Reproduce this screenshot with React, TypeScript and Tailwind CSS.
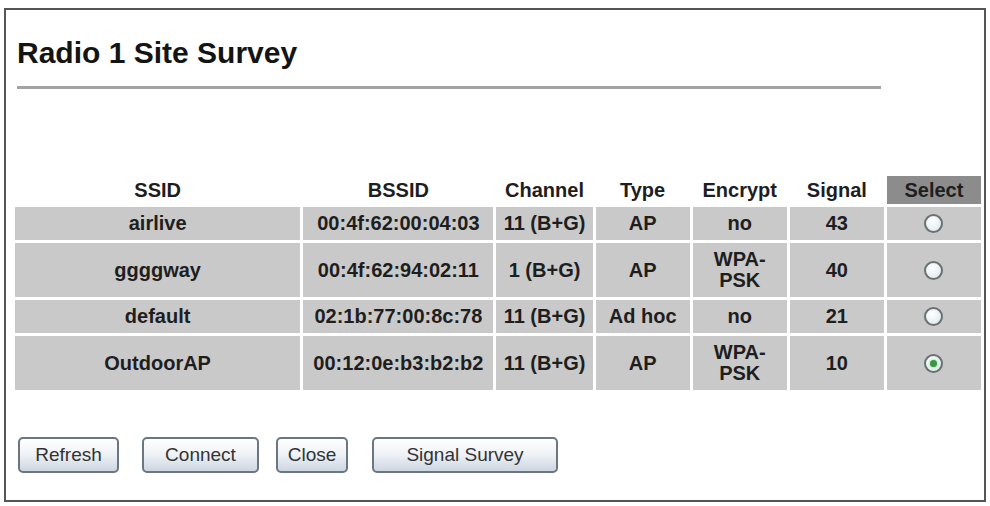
import React from 'react'

type Network = {
  ssid: string
  bssid: string
  channel: string
  type: string
  encrypt: string[]
  signal: number
  selected?: boolean
}

const networks: Network[] = [
  { ssid: 'airlive', bssid: '00:4f:62:00:04:03', channel: '11 (B+G)', type: 'AP', encrypt: ['no'], signal: 43 },
  { ssid: 'ggggway', bssid: '00:4f:62:94:02:11', channel: '1 (B+G)', type: 'AP', encrypt: ['WPA-', 'PSK'], signal: 40 },
  { ssid: 'default', bssid: '02:1b:77:00:8c:78', channel: '11 (B+G)', type: 'Ad hoc', encrypt: ['no'], signal: 21 },
  { ssid: 'OutdoorAP', bssid: '00:12:0e:b3:b2:b2', channel: '11 (B+G)', type: 'AP', encrypt: ['WPA-', 'PSK'], signal: 10, selected: true },
]

const headers = ['SSID', 'BSSID', 'Channel', 'Type', 'Encrypt', 'Signal']

const Radio = ({ checked }: { checked?: boolean }) => (
  <span className="mx-auto flex h-[19px] w-[19px] items-center justify-center rounded-full border-2 border-[#6a7074] bg-[radial-gradient(circle_at_40%_35%,#ffffff,#d9e7e8)]">
    {checked && <span className="h-[7px] w-[7px] rounded-full bg-[#3a9644] shadow-[0_0_3px_#6fcf7a]" />}
  </span>
)

const Button = ({ label, width }: { label: string; width: string }) => (
  <button
    className={`${width} h-[36px] rounded-[5px] border-2 border-[#6b7682] bg-gradient-to-b from-[#ffffff] via-[#eef1f5] to-[#cdd6e2] text-[19px] text-[#333]`}
  >
    {label}
  </button>
)

const SiteSurvey = () => {
  return (
    <div className="pl-[4px] pt-[8px] font-['Liberation_Sans',Arial,sans-serif]">
      <div className="flex h-[494px] w-[982px] flex-col border-2 border-[#555] bg-white">
        <h1 className="ml-[11px] mt-[26px] text-[30px] font-bold leading-[34px] text-[#141414]">
          Radio 1 Site Survey
        </h1>
        <div className="ml-[11px] mt-[16px] h-[3px] w-[864px] bg-[#a3a3a3]" />

        <table className="ml-[6px] mt-[84px] table-fixed border-separate border-spacing-[3px] text-[20px] font-bold text-[#1e1e1e]">
          <colgroup>
            <col className="w-[285px]" />
            <col className="w-[190px]" />
            <col className="w-[96px]" />
            <col className="w-[94px]" />
            <col className="w-[94px]" />
            <col className="w-[94px]" />
            <col className="w-[94px]" />
          </colgroup>
          <thead>
            <tr>
              {headers.map((h) => (
                <th key={h} className="h-[28px] p-0 text-center leading-[28px]">
                  {h}
                </th>
              ))}
              <th className="h-[28px] bg-[#8c8c8c] p-0 text-center leading-[28px]">Select</th>
            </tr>
          </thead>
          <tbody>
            {networks.map((n) => (
              <tr key={n.bssid}>
                <td className="bg-[#c9c9c9] px-1 py-[6px] text-center leading-[21px]">{n.ssid}</td>
                <td className="bg-[#c9c9c9] px-1 py-[6px] text-center leading-[21px]">{n.bssid}</td>
                <td className="bg-[#c9c9c9] px-0 py-[6px] text-center leading-[21px]">{n.channel}</td>
                <td className="bg-[#c9c9c9] px-0 py-[6px] text-center leading-[21px]">{n.type}</td>
                <td className="bg-[#c9c9c9] px-0 py-[6px] text-center leading-[21px]">
                  {n.encrypt.map((line) => (
                    <div key={line}>{line}</div>
                  ))}
                </td>
                <td className="bg-[#c9c9c9] px-0 py-[6px] text-center leading-[21px]">{n.signal}</td>
                <td className="bg-[#c9c9c9] px-0 py-[6px] text-center leading-[21px]">
                  <Radio checked={n.selected} />
                </td>
              </tr>
            ))}
          </tbody>
        </table>

        <div className="ml-[12px] mt-[44px] flex">
          <Button label="Refresh" width="w-[101px]" />
          <div className="w-[23px]" />
          <Button label="Connect" width="w-[117px]" />
          <div className="w-[17px]" />
          <Button label="Close" width="w-[72px]" />
          <div className="w-[24px]" />
          <Button label="Signal Survey" width="w-[186px]" />
        </div>
      </div>
    </div>
  )
}

export default function App() {
  return <SiteSurvey />
}
